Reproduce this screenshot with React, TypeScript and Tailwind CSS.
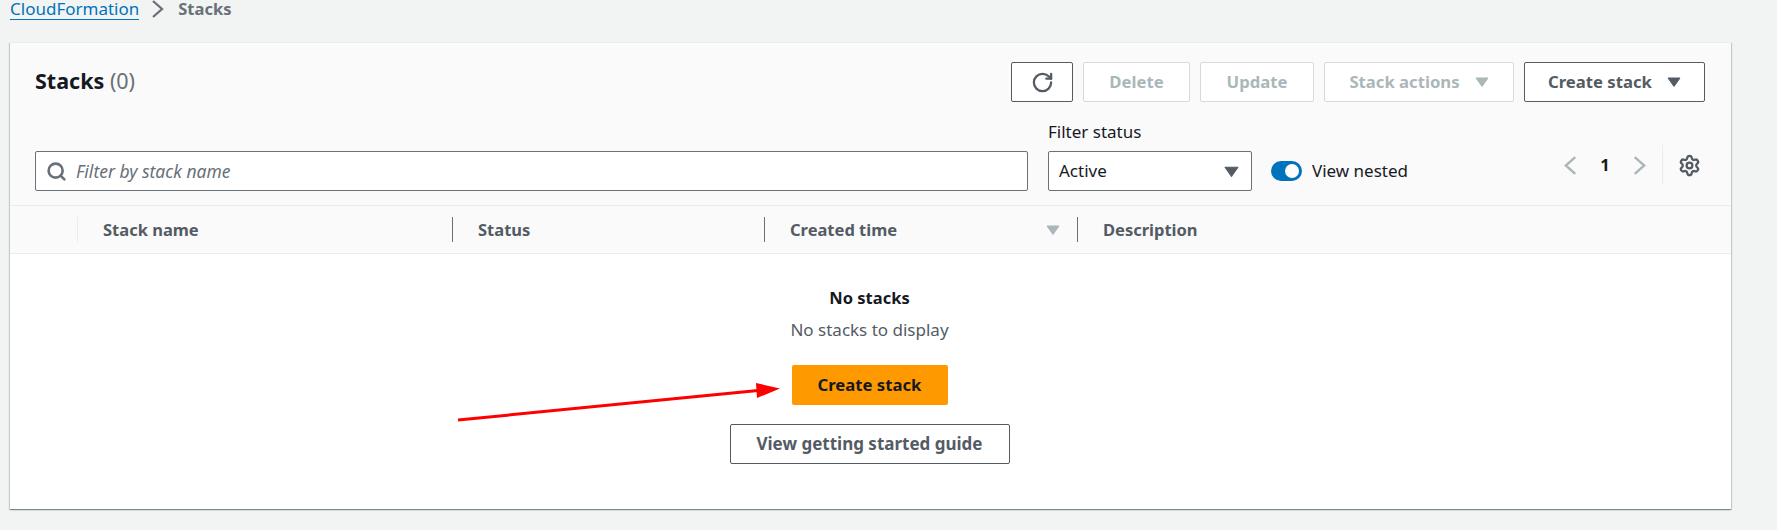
import { RotateCw, Search, Settings } from "lucide-react";

const Caret = ({ className }: { className: string }) => (
  <svg viewBox="0 0 14 10" className={className} fill="currentColor">
    <path d="M1 1h12L7 9.5z" stroke="currentColor" strokeWidth="1" strokeLinejoin="round" />
  </svg>
);

// wide open chevron, lucide's is too small for the pager
const Chevron = ({ left, className }: { left?: boolean; className: string }) => (
  <svg viewBox="0 0 12 18" className={className} fill="none" stroke="currentColor" strokeWidth="2.3">
    <path d={left ? "M10.5 1L1.5 9l9 8" : "M1.5 1l9 8-9 8"} />
  </svg>
);

const Disabled = ({ label, w, caret }: { label: string; w: string; caret?: boolean }) => (
  <div
    className={`${w} h-10 flex items-center justify-center gap-[15px] rounded-[2px] border border-[#d5dbdb] bg-white text-[#aab7b8] font-bold text-[16.7px]`}
  >
    {label}
    {caret && <Caret className="w-[14px] h-[10px]" />}
  </div>
);

export default function App() {
  return (
    <div className="w-[1777px] h-[530px] overflow-hidden relative bg-[#f2f3f3] font-['Noto_Sans',sans-serif] text-[17px] leading-[22px] text-[#16191f]">
      {/* Breadcrumbs */}
      <div className="h-[42px] pl-[10px] flex items-start leading-[18px]">
        <span className="text-[#0073bb] border-b border-[#0073bb] h-[20px]">CloudFormation</span>
        <Chevron className="w-[13px] h-[18px] text-[#687078] ml-[12px]" />
        <span className="ml-[14px] font-bold text-[#687078] text-[16.5px]">Stacks</span>
      </div>

      {/* Card */}
      <div className="ml-[10px] w-[1721px] h-[467px] flex flex-col bg-white border-t border-[#eaeded] shadow-[0_1px_1px_0_rgba(0,28,36,0.3),1px_1px_1px_0_rgba(0,28,36,0.15),-1px_1px_1px_0_rgba(0,28,36,0.15)]">
        <div className="bg-[#fafafa] h-[163px] pl-[25px] pr-[26px] pt-[19px] border-b border-[#eaeded] flex flex-col">
          <div className="flex justify-between items-start">
            <h1 className="text-[21.5px] font-bold leading-[28px] mt-[5px]">
              Stacks <span className="font-normal text-[#687078]">(0)</span>
            </h1>
            <div className="flex gap-[10px]">
              <div className="w-[62px] h-10 flex items-center justify-center rounded-[2px] border border-[#545b64] bg-white text-[#545b64]">
                <RotateCw className="w-[23px] h-[23px]" strokeWidth={2.4} />
              </div>
              <Disabled label="Delete" w="w-[107px]" />
              <Disabled label="Update" w="w-[114px]" />
              <Disabled label="Stack actions" w="w-[190px]" caret />
              <div className="w-[181px] h-10 flex items-center justify-center gap-[15px] rounded-[2px] border border-[#545b64] bg-white text-[#545b64] font-bold text-[16.7px]">
                Create stack
                <Caret className="w-[14px] h-[10px]" />
              </div>
            </div>
          </div>

          <div className="flex items-start mt-[19px]">
            <div className="w-[993px] h-10 mt-[30px] flex items-center gap-[9px] pl-[10px] rounded-[2px] border border-[#687078] bg-white">
              <Search className="w-[21px] h-[21px] text-[#687078]" strokeWidth={3} />
              <span className="italic text-[#687078] text-[17.5px]">Filter by stack name</span>
            </div>
            <div className="ml-[20px] w-[204px]">
              <div className="h-[22px] mb-[8px]">Filter status</div>
              <div className="h-10 flex items-center justify-between pl-[10px] pr-[12px] rounded-[2px] border border-[#687078] bg-white">
                Active
                <Caret className="w-[15px] h-[11px] text-[#545b64]" />
              </div>
            </div>
            <div className="ml-[19px] mt-[39px] flex items-center gap-[10px]">
              <div className="w-[31px] h-[20px] rounded-full bg-[#0073bb] relative">
                <div className="absolute right-[3px] top-[3px] w-[14px] h-[14px] rounded-full bg-white" />
              </div>
              <span>View nested</span>
            </div>
            <div className="ml-auto mt-[24px] flex items-center h-10">
              <Chevron left className="w-[13px] h-[19px] text-[#aab7b8]" />
              <span className="w-[56px] text-center font-bold text-[16.5px]">1</span>
              <Chevron className="w-[13px] h-[19px] text-[#aab7b8]" />
              <div className="w-px h-[40px] bg-[#eaeded] ml-[16px] mr-[15px]" />
              <Settings className="w-[23px] h-[23px] text-[#545b64] mr-[4px]" strokeWidth={2.4} />
            </div>
          </div>
        </div>

        {/* Table header */}
        <div className="h-[48px] bg-[#fafafa] border-b border-[#eaeded] flex items-center font-bold text-[#545b64] text-[16.5px]">
          <div className="w-[67px]" />
          <div className="w-[375px] h-[25px] flex items-center pl-[25px] border-l border-[#eaeded]">Stack name</div>
          <div className="w-[312px] h-[25px] flex items-center pl-[25px] border-l border-[#687078]">Status</div>
          <div className="w-[313px] h-[25px] flex items-center justify-between pl-[25px] pr-[17px] border-l border-[#687078]">
            Created time
            <Caret className="w-[14px] h-[10px] text-[#aab7b8]" />
          </div>
          <div className="h-[25px] flex items-center pl-[25px] border-l border-[#687078]">Description</div>
        </div>

        {/* Empty state */}
        <div className="flex-1 flex flex-col items-center pt-[33px] pr-[2px]">
          <div className="font-bold text-[16.5px]">No stacks</div>
          <div className="mt-[10px] text-[#545b64]">No stacks to display</div>
          <div className="mt-[24px] w-[156px] h-10 flex items-center justify-center rounded-[2px] bg-[#ff9900] font-bold text-[16.7px]">
            Create stack
          </div>
          <div className="mt-[19px] w-[280px] h-10 flex items-center justify-center rounded-[2px] border border-[#545b64] bg-white text-[#545b64] font-bold">
            View getting started guide
          </div>
        </div>
      </div>

      {/* Red annotation arrow */}
      <svg className="absolute left-[450px] top-[375px]" width="340" height="50" viewBox="450 375 340 50">
        <line x1="458" y1="420" x2="758" y2="390.5" stroke="#ff0000" strokeWidth="3" />
        <path d="M756 383L780 388.5L757 398z" fill="#ff0000" />
      </svg>
    </div>
  );
}
